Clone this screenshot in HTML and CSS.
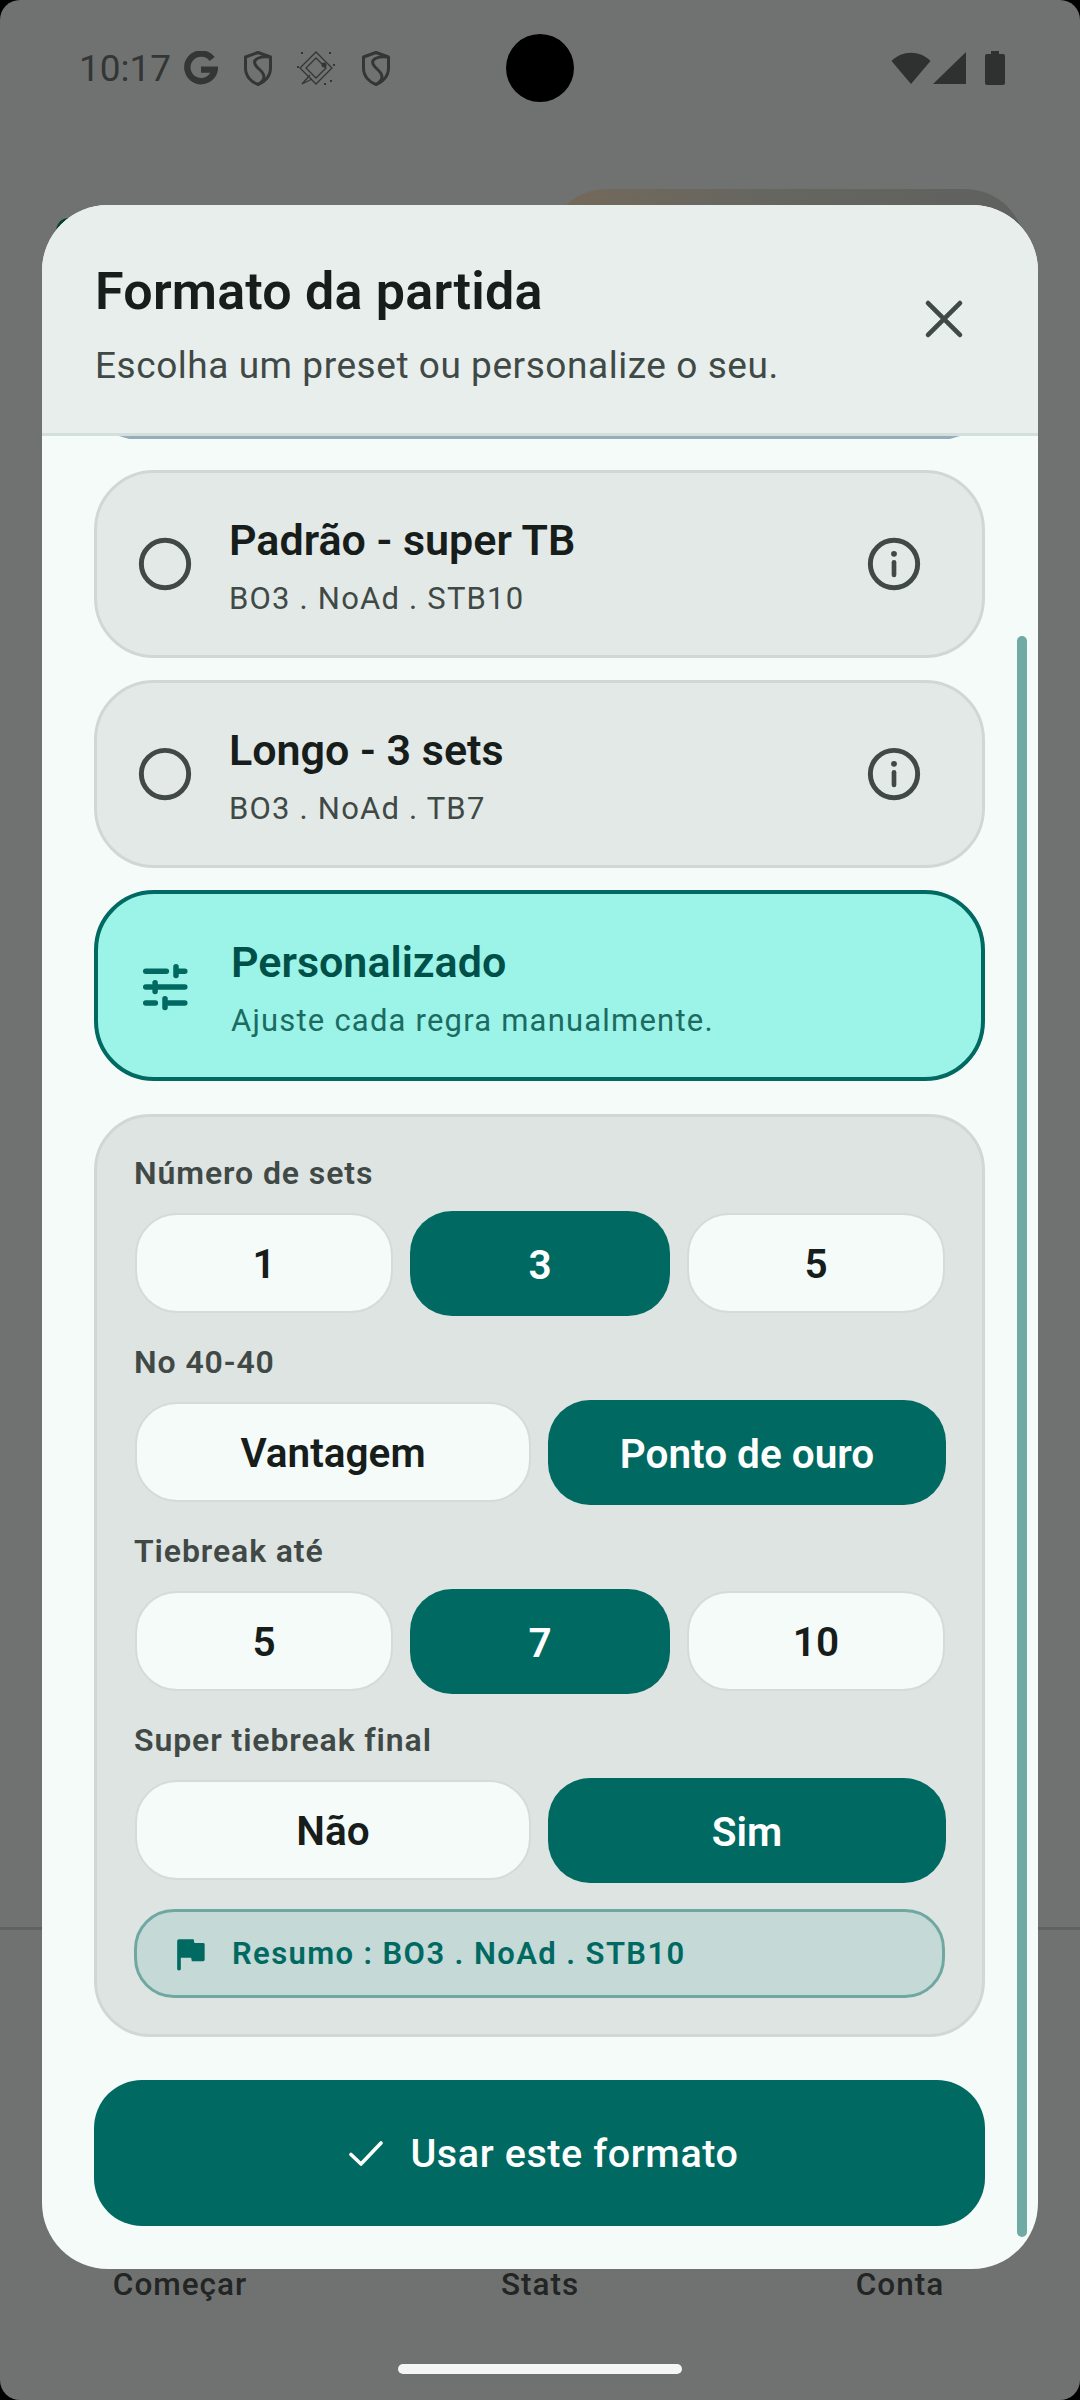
FILE: index.html
```html
<!DOCTYPE html>
<html lang="pt">
<head>
    <meta charset="UTF-8">
    <title>Formato da partida</title>
    <link rel="stylesheet" href="styles.css">
</head>
<body>
    <div class="screen">
        <!-- Page behind the dimmed backdrop -->
        <div class="status-bar">
            <span class="clock">10:17</span>
            <svg class="st-g" viewBox="0 0 32 32"><path d="M26.5 7.5A13 13 0 1 0 29 17.5H16" fill="none" stroke="#333634" stroke-width="6"/></svg>
            <svg class="st-shield" viewBox="0 0 28 35"><path d="M14 1.5L26.5 6V17C26.5 25 21 31 14 33.5C7 31 1.5 25 1.5 17V6Z" fill="none" stroke="#333634" stroke-width="3" stroke-linejoin="round"/><path d="M25 6C16 5 9 8 11 13C13 18 20 20 20 26C20 28 18 31 15 33" fill="none" stroke="#333634" stroke-width="3"/></svg>
            <svg class="st-diamond" viewBox="0 0 40 36"><g fill="none" stroke="#333634" stroke-width="1.3"><path d="M20 2L36 18L20 34L4 18Z"/><path d="M20 8L30 18L20 28L10 18Z"/><path d="M14 25L6 34L16 29"/></g><circle cx="28" cy="15" r="2.5" fill="#333634"/><g fill="#333634"><rect x="5" y="2" width="2" height="2"/><rect x="33" y="2" width="2" height="2"/><rect x="37" y="14" width="2" height="2"/><rect x="1" y="16" width="2" height="2"/><rect x="34" y="30" width="2" height="2"/><rect x="28" y="33" width="2" height="2"/></g></svg>
            <svg class="st-shield st-shield-last" viewBox="0 0 28 35"><path d="M14 1.5L26.5 6V17C26.5 25 21 31 14 33.5C7 31 1.5 25 1.5 17V6Z" fill="none" stroke="#333634" stroke-width="3" stroke-linejoin="round"/><path d="M25 6C16 5 9 8 11 13C13 18 20 20 20 26C20 28 18 31 15 33" fill="none" stroke="#333634" stroke-width="3"/></svg>
            <span class="status-gap"></span>
            <svg class="st-wifi" viewBox="0 0 40 32"><path d="M0.5 9C11-2 29-2 39.5 9L20 32Z" fill="#2e312f"/></svg>
            <svg class="st-signal" viewBox="0 0 33 32"><path d="M0 32L33 0V32Z" fill="#2e312f"/></svg>
            <svg class="st-battery" viewBox="0 0 20 34"><path d="M6 0H14V3H18Q20 3 20 5V32Q20 34 18 34H2Q0 34 0 32V5Q0 3 2 3H6Z" fill="#2e312f"/></svg>
        </div>
        <div class="camera"></div>

        <div class="hero">
            <span class="hero-letter">C</span>
            <div class="hero-image"></div>
        </div>

        <div class="nav">
            <span>Começar</span>
            <span>Stats</span>
            <span>Conta</span>
        </div>
        <div class="home-pill"></div>

        <!-- Bottom sheet -->
        <div class="sheet">
            <div class="sheet-head">
                <div class="sheet-titles">
                    <h1>Formato da partida</h1>
                    <p>Escolha um preset ou personalize o seu.</p>
                </div>
                <svg class="icon" viewBox="0 0 24 24"><path d="M6.2 6.2L17.8 17.8M17.8 6.2L6.2 17.8" fill="none" stroke="#404946" stroke-width="1.7" stroke-linecap="round"/></svg>
            </div>

            <div class="sheet-body">
                <div class="peek"></div>

                <div class="preset">
                    <svg class="icon" viewBox="0 0 24 24"><circle cx="12" cy="12" r="8.6" fill="none" stroke="#404946" stroke-width="1.8"/></svg>
                    <div class="preset-text">
                        <div class="preset-name">Padrão - super TB</div>
                        <div class="preset-desc">BO3 . NoAd . STB10</div>
                    </div>
                    <svg class="icon" viewBox="0 0 24 24"><circle cx="12" cy="12" r="8.6" fill="none" stroke="#404946" stroke-width="1.8"/><path d="M12 11.4V16" stroke="#404946" stroke-width="1.7" stroke-linecap="round"/><circle cx="12" cy="8.3" r="1.05" fill="#404946"/></svg>
                </div>

                <div class="preset">
                    <svg class="icon" viewBox="0 0 24 24"><circle cx="12" cy="12" r="8.6" fill="none" stroke="#404946" stroke-width="1.8"/></svg>
                    <div class="preset-text">
                        <div class="preset-name">Longo - 3 sets</div>
                        <div class="preset-desc">BO3 . NoAd . TB7</div>
                    </div>
                    <svg class="icon" viewBox="0 0 24 24"><circle cx="12" cy="12" r="8.6" fill="none" stroke="#404946" stroke-width="1.8"/><path d="M12 11.4V16" stroke="#404946" stroke-width="1.7" stroke-linecap="round"/><circle cx="12" cy="8.3" r="1.05" fill="#404946"/></svg>
                </div>

                <div class="preset active">
                    <svg class="icon" viewBox="0 0 24 24"><g fill="none" stroke="#006a62" stroke-width="2" stroke-linecap="round"><path d="M5 6.6H12.5M16 5V8.2M16 6.6H19.2M5 12.4H7M8.4 10.8V14M8.4 12.4H19.2M5 18.2H8.5M12 16.6V19.8M12 18.2H19.2"/></g></svg>
                    <div class="preset-text">
                        <div class="preset-name">Personalizado</div>
                        <div class="preset-desc">Ajuste cada regra manualmente.</div>
                    </div>
                </div>

                <div class="custom-panel">
                    <div class="opt-label">Número de sets</div>
                    <div class="opt-row three">
                        <div class="opt">1</div>
                        <div class="opt on">3</div>
                        <div class="opt">5</div>
                    </div>

                    <div class="opt-label">No 40-40</div>
                    <div class="opt-row two">
                        <div class="opt">Vantagem</div>
                        <div class="opt on">Ponto de ouro</div>
                    </div>

                    <div class="opt-label">Tiebreak até</div>
                    <div class="opt-row three">
                        <div class="opt">5</div>
                        <div class="opt on">7</div>
                        <div class="opt">10</div>
                    </div>

                    <div class="opt-label">Super tiebreak final</div>
                    <div class="opt-row two">
                        <div class="opt">Não</div>
                        <div class="opt on">Sim</div>
                    </div>

                    <div class="summary">
                        <svg class="summary-flag" viewBox="0 0 24 24"><path d="M14.4 6L14 4H6Q5 4 5 5V20.2Q5 21 6 21Q7 21 7 20.2V14H12.6L13 16H19.2Q20 16 20 15.2V6.8Q20 6 19.2 6Z" fill="#006a62"/></svg>
                        <span>Resumo : BO3 . NoAd . STB10</span>
                    </div>
                </div>

                <div class="use-btn">
                    <svg class="use-check" viewBox="0 0 34 25"><path d="M2 13.5L12 23L32 2" fill="none" stroke="#fff" stroke-width="3.6" stroke-linecap="round" stroke-linejoin="round"/></svg>
                    <span>Usar este formato</span>
                </div>
            </div>

            <div class="scroll-thumb"></div>
        </div>
    </div>
</body>
</html>
```

FILE: styles.css
```css
* {
    box-sizing: border-box;
}

body {
    margin: 0;
    background: #000;
    font-family: Roboto, "Liberation Sans", sans-serif;
}

.screen {
    position: relative;
    display: flex;
    flex-direction: column;
    width: 1080px;
    height: 2400px;
    overflow: hidden;
    background: #707271;
    border-radius: 20px;
}

/* status bar */
.status-bar {
    display: flex;
    align-items: center;
    height: 136px;
    padding: 0 75px 0 79px;
    flex-shrink: 0;
}

.clock {
    font-size: 37px;
    color: #333634;
    margin-right: 13px;
}

.st-g {
    width: 34px;
    height: 34px;
    margin-right: 26px;
}

.st-shield {
    width: 28px;
    height: 35px;
    margin-right: 24px;
}

.st-shield-last {
    margin-right: 0;
}

.st-diamond {
    width: 40px;
    height: 36px;
    margin-right: 26px;
}

.status-gap {
    flex: 1;
}

.st-wifi {
    width: 40px;
    height: 32px;
    margin-right: 2px;
}

.st-signal {
    width: 33px;
    height: 32px;
    margin-right: 19px;
}

.st-battery {
    width: 20px;
    height: 34px;
}

.camera {
    position: absolute;
    left: 506px;
    top: 34px;
    width: 68px;
    height: 68px;
    border-radius: 50%;
    background: #000;
}

/* dimmed page under the sheet */
.hero {
    display: flex;
    justify-content: space-between;
    align-items: flex-start;
    padding: 53px 55px 0 54px;
    flex: 1;
}

.hero-letter {
    font-size: 44px;
    font-weight: 700;
    line-height: 52px;
    margin-top: 20px;
    color: #00403b;
}

.hero-image {
    width: 478px;
    height: 300px;
    border-radius: 60px;
    background: linear-gradient(90deg, #74695a, #666660 45%, #5f615f);
}

.nav {
    display: grid;
    grid-template-columns: repeat(3, 1fr);
    height: 473px;
    padding-top: 336px;
    border-top: 3px solid #606261;
    font-size: 31.5px;
    font-weight: 500;
    letter-spacing: 1px;
    color: #222524;
    text-align: center;
}

.home-pill {
    position: absolute;
    left: 398px;
    top: 2364px;
    width: 284px;
    height: 10px;
    border-radius: 5px;
    background: #f5f5f5;
}

/* bottom sheet */
.sheet {
    position: absolute;
    left: 42px;
    top: 205px;
    width: 996px;
    height: 2064px;
    overflow: hidden;
    display: flex;
    flex-direction: column;
    background: #f5fbf9;
    border-radius: 66px;
}

.sheet-head {
    display: flex;
    align-items: center;
    justify-content: space-between;
    height: 231px;
    padding: 0 61px 0 53px;
    background: #e8eeec;
    border-bottom: 3px solid #d4dedb;
    flex-shrink: 0;
}

.sheet-titles {
    margin-top: 14px;
}

.sheet-titles h1 {
    margin: 0;
    font-size: 52px;
    font-weight: 600;
    line-height: 60px;
    letter-spacing: 0.2px;
    color: #171d1b;
}

.sheet-titles p {
    margin: 20px 0 0;
    font-size: 37px;
    line-height: 48px;
    letter-spacing: 0.55px;
    color: #404946;
}

.icon {
    width: 66px;
    height: 66px;
    flex-shrink: 0;
}

.sheet-body {
    padding: 0 53px 0 52px;
}

.peek {
    height: 3px;
    margin: 0 25px 31px;
    background: #96adc0;
    clip-path: polygon(0 0, 100% 0, 98.8% 100%, 1.2% 100%);
}

.preset {
    display: flex;
    align-items: center;
    height: 188px;
    margin-bottom: 22px;
    padding: 0 55px 0 35px;
    background: #e3e9e7;
    border: 3px solid #d0d8d5;
    border-radius: 60px;
}

.preset.active {
    height: 191px;
    margin-bottom: 33px;
    background: #9cf3e7;
    border: 4px solid #006a62;
    padding-left: 34px;
}

.preset-text {
    flex: 1;
    margin: 5px 0 0 31px;
}

.preset-name {
    font-size: 43px;
    font-weight: 600;
    line-height: 52px;
    color: #171d1b;
}

.preset-desc {
    margin-top: 13px;
    font-size: 31px;
    line-height: 40px;
    letter-spacing: 1.2px;
    color: #404946;
}

.active .preset-text {
    margin-left: 33px;
}

.active .preset-name {
    color: #00504a;
}

.active .preset-desc {
    color: #1c6b62;
}

/* custom options */
.custom-panel {
    height: 923px;
    padding: 36px 36px 36px 37px;
    background: #dee4e2;
    border: 3px solid #d0d8d5;
    border-radius: 56px;
}

.opt-label {
    height: 40px;
    margin-bottom: 18px;
    font-size: 32px;
    font-weight: 600;
    line-height: 40px;
    letter-spacing: 0.9px;
    color: #404946;
}

.opt-row {
    display: grid;
    gap: 16px;
    height: 105px;
    margin-bottom: 26px;
}

.opt-row.three {
    grid-template-columns: repeat(3, 1fr);
}

.opt-row.two {
    grid-template-columns: repeat(2, 1fr);
}

.opt {
    display: flex;
    align-items: center;
    justify-content: center;
    margin: 2px 1px 3px;
    padding-top: 2px;
    font-size: 40.5px;
    font-weight: 600;
    color: #171d1b;
    background: #f5fbf9;
    border: 2px solid #d5dbd9;
    border-radius: 42px;
}

.opt.on {
    margin: 0;
    color: #fff;
    background: #006a62;
    border: 0;
}

.summary {
    display: flex;
    align-items: center;
    height: 89px;
    margin: 0 1px 0 0;
    padding: 0 0 0 31px;
    font-size: 31px;
    font-weight: 600;
    letter-spacing: 1.4px;
    color: #006a62;
    background: #c5d9d6;
    border: 3px solid #6fa8a2;
    border-radius: 40px;
}

.summary-flag {
    width: 44px;
    height: 44px;
    margin-right: 20px;
}

.use-btn {
    display: flex;
    align-items: center;
    justify-content: center;
    gap: 27px;
    height: 146px;
    margin-top: 43px;
    padding-left: 9px;
    font-size: 39.5px;
    font-weight: 500;
    letter-spacing: 0.6px;
    color: #fff;
    background: #006a62;
    border-radius: 48px;
}

.use-check {
    width: 34px;
    height: 25px;
}

.scroll-thumb {
    position: absolute;
    left: 975px;
    top: 431px;
    width: 10px;
    height: 1601px;
    background: #6faaa3;
    border-radius: 5px;
}
```
